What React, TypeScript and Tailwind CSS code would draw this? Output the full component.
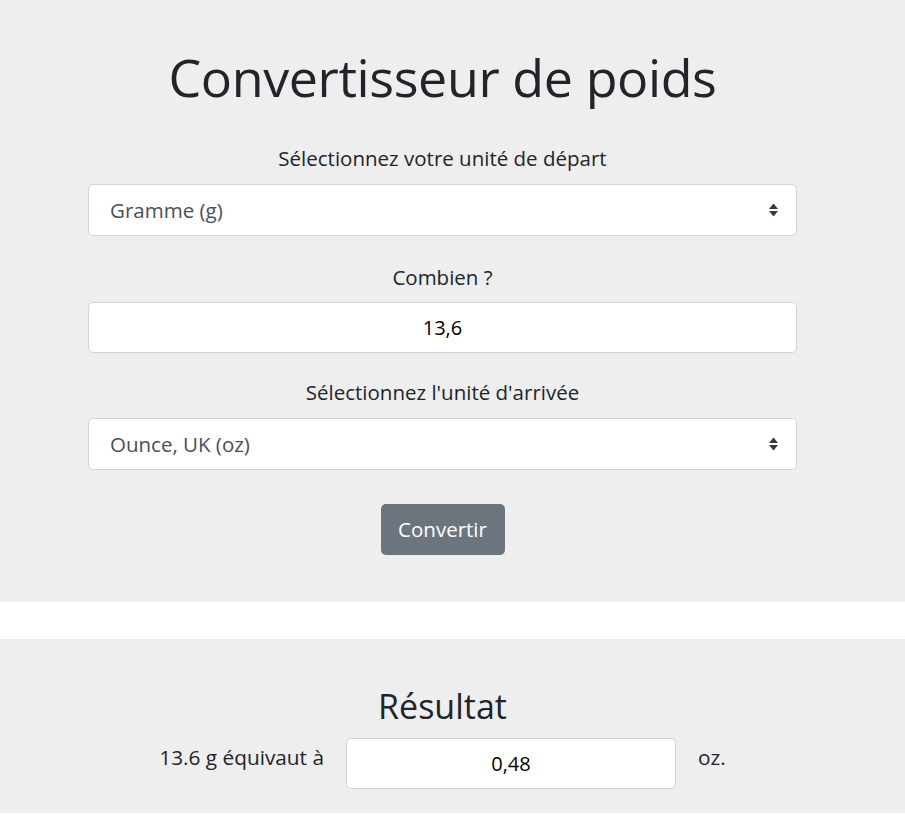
import React from "react";

const font = { fontFamily: '"Open Sans", "Liberation Sans", sans-serif' };

function Arrows() {
  return (
    <svg width="9" height="13" viewBox="0 0 9 13" className="absolute right-[18px] top-1/2 -translate-y-1/2">
      <path d="M4.5 0 L9 5.5 L0 5.5 Z" fill="#343a40" />
      <path d="M0 7.5 L9 7.5 L4.5 13 Z" fill="#343a40" />
    </svg>
  );
}

function FakeSelect({ value }: { value: string }) {
  return (
    <div className="relative w-full h-[52px] bg-white border border-[#ced4da] rounded-[5px] flex items-center pl-[21px] text-[20.5px] text-[#495057]">
      <span>{value}</span>
      <Arrows />
    </div>
  );
}

export default function App() {
  return (
    <div style={font} className="w-[905px] min-h-[837px] bg-white text-[#212529]">
      <section className="bg-[#eeeeee] h-[602px] pt-[43px]">
        <div className="ml-[88px] w-[709px] flex flex-col items-center">
          <h1 className="text-[52px] leading-[67px] font-normal tracking-[-0.4px]">Convertisseur de poids</h1>
          <div className="mt-[33px] text-[20.5px] leading-[30px] font-normal">Sélectionnez votre unité de départ</div>
          <div className="mt-[11px] w-full"><FakeSelect value="Gramme (g)" /></div>
          <div className="mt-[26px] text-[20.5px] leading-[30px] font-normal">Combien ?</div>
          <div className="mt-[10px] w-full h-[51px] bg-white border border-[#ced4da] rounded-[5px] flex items-center justify-center text-[20px] text-black">13,6</div>
          <div className="mt-[24px] text-[20.5px] leading-[30px] font-normal">Sélectionnez l'unité d'arrivée</div>
          <div className="mt-[11px] w-full"><FakeSelect value="Ounce, UK (oz)" /></div>
          <button className="mt-[34px] w-[124px] h-[51px] bg-[#6c757d] text-white text-[20.5px] rounded-[5px]">Convertir</button>
        </div>
      </section>
      <div className="h-[37px]" />
      <section className="bg-[#eeeeee] h-[174px] pt-[45px]">
        <div className="ml-[88px] w-[709px] flex flex-col items-center">
          <h2 className="text-[34px] leading-[44px]">Résultat</h2>
          <div className="mt-[10px] flex items-center gap-[22px]">
            <span className="text-[20.8px] -mt-[12px]">13.6 g équivaut à</span>
            <div className="w-[330px] h-[51px] bg-white border border-[#ced4da] rounded-[5px] flex items-center justify-center text-[20px] text-black">0,48</div>
            <span className="text-[20.8px] -mt-[12px]">oz.</span>
          </div>
        </div>
      </section>
    </div>
  );
}
